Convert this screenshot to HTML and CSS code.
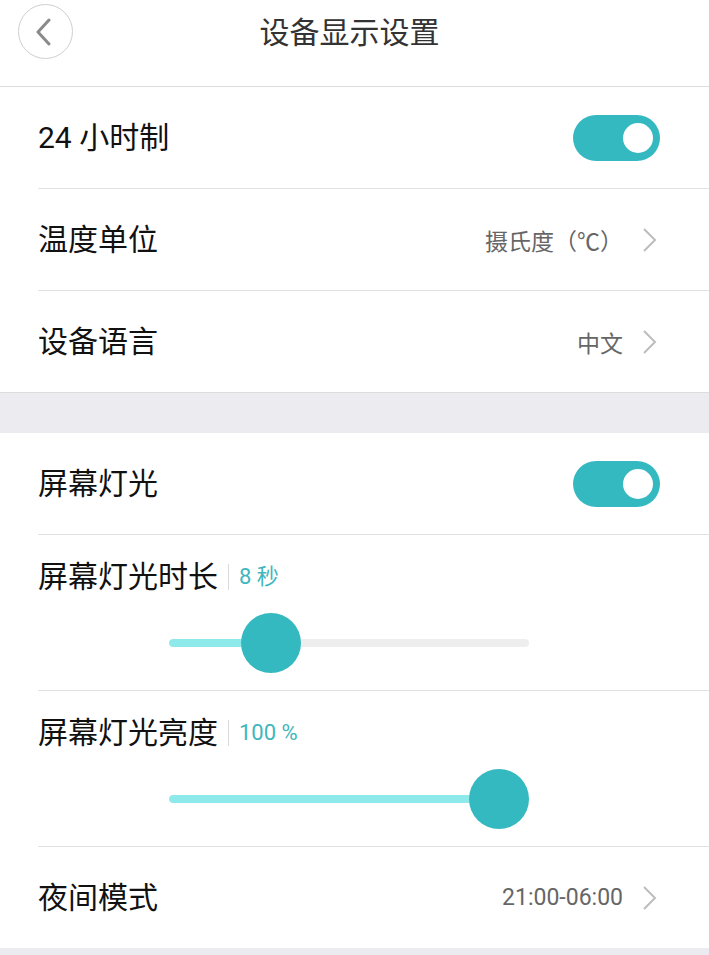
FILE: index.html
```html
<!DOCTYPE html>
<html lang="zh-CN">
<head>
    <meta charset="UTF-8">
    <meta name="viewport" content="width=device-width, initial-scale=1.0">
    <title>设备显示设置</title>
    <link rel="stylesheet" href="styles.css">
</head>
<body>
    <header class="top-bar">
        <button class="back-btn" aria-label="返回">
            <svg width="20" height="28" viewBox="0 0 20 28">
                <polyline points="15,2 4,14 15,26" fill="none" stroke="#8a8a8a" stroke-width="3" stroke-linecap="round" stroke-linejoin="round"/>
            </svg>
        </button>
        <h1 class="page-title">设备显示设置</h1>
    </header>

    <!-- Basic settings -->
    <section class="group">
        <div class="row">
            <span class="row-label">24 小时制</span>
            <span class="switch"><span class="switch-knob"></span></span>
        </div>
        <div class="row">
            <span class="row-label">温度单位</span>
            <span class="row-value">摄氏度（℃）</span>
            <svg class="chevron" width="16" height="26" viewBox="0 0 16 26">
                <polyline points="2,2 13,13 2,24" fill="none" stroke="#bdbdbd" stroke-width="2"/>
            </svg>
        </div>
        <div class="row">
            <span class="row-label">设备语言</span>
            <span class="row-value">中文</span>
            <svg class="chevron" width="16" height="26" viewBox="0 0 16 26">
                <polyline points="2,2 13,13 2,24" fill="none" stroke="#bdbdbd" stroke-width="2"/>
            </svg>
        </div>
    </section>

    <div class="spacer"></div>

    <!-- Screen light settings -->
    <section class="group">
        <div class="row">
            <span class="row-label">屏幕灯光</span>
            <span class="switch"><span class="switch-knob"></span></span>
        </div>
        <div class="row slider-row">
            <div class="slider-head">
                <span class="row-label">屏幕灯光时长</span>
                <span class="slider-value">8 秒</span>
            </div>
            <div class="slider">
                <div class="slider-track"><div class="slider-fill" style="width: 102px"></div></div>
                <div class="slider-thumb" style="left: 72px"></div>
            </div>
        </div>
        <div class="row slider-row">
            <div class="slider-head">
                <span class="row-label">屏幕灯光亮度</span>
                <span class="slider-value">100 %</span>
            </div>
            <div class="slider">
                <div class="slider-track"><div class="slider-fill" style="width: 330px"></div></div>
                <div class="slider-thumb" style="left: 300px"></div>
            </div>
        </div>
        <div class="row">
            <span class="row-label">夜间模式</span>
            <span class="row-value">21:00-06:00</span>
            <svg class="chevron" width="16" height="26" viewBox="0 0 16 26">
                <polyline points="2,2 13,13 2,24" fill="none" stroke="#bdbdbd" stroke-width="2"/>
            </svg>
        </div>
    </section>
</body>
</html>
```

FILE: styles.css
```css
* {
    margin: 0;
    padding: 0;
    box-sizing: border-box;
}

body {
    background-color: #ebebf0;
    font-family: Roboto, "Noto Sans CJK SC", sans-serif;
    color: #111;
}

/* Header */
.top-bar {
    display: flex;
    align-items: flex-start;
    height: 87px;
    padding: 4px 0 0 18px;
    background-color: #fff;
    border-bottom: 1px solid #dcdcdc;
}

.back-btn {
    width: 55px;
    height: 55px;
    border: 1px solid #cfcfcf;
    border-radius: 50%;
    background: #fff;
    display: flex;
    align-items: center;
    justify-content: center;
    padding-right: 4px;
}

.page-title {
    flex: 1;
    margin-right: 83px;
    text-align: center;
    font-size: 30px;
    font-weight: normal;
    line-height: 58px;
    color: #333;
}

/* Groups and rows */
.group {
    background-color: #fff;
}

.row {
    display: flex;
    align-items: center;
    height: 102px;
    margin-left: 38px;
    padding-right: 49px;
    border-bottom: 1px solid #e2e2e2;
}

.row:last-child {
    height: 101px;
    border-bottom: none;
}

.row-label {
    flex: 1;
    font-size: 30px;
    line-height: 40px;
    color: #111;
}

.row-value {
    font-size: 23px;
    color: #666;
    margin-right: 19px;
}

.chevron {
    margin-right: 2px;
}

.spacer {
    height: 41px;
    border-top: 1px solid #dcdcdc;
}

/* Switch */
.switch {
    display: flex;
    justify-content: flex-end;
    align-items: center;
    width: 87px;
    height: 46px;
    padding: 0 7px;
    border-radius: 23px;
    background-color: #35b9c1;
}

.switch-knob {
    width: 30px;
    height: 30px;
    border-radius: 50%;
    background-color: #fff;
}

/* Sliders */
.slider-row {
    display: block;
    height: 156px;
    padding-top: 22px;
}

.slider-head {
    display: flex;
    align-items: center;
}

.slider-head .row-label {
    flex: none;
}

.slider-value {
    margin-left: 10px;
    padding-left: 10px;
    border-left: 1px solid #dadada;
    font-size: 22px;
    line-height: 26px;
    color: #3fb6bd;
}

.slider {
    position: relative;
    width: 360px;
    height: 60px;
    margin: 16px 0 0 131px;
}

.slider-track {
    position: relative;
    top: 26px;
    height: 8px;
    border-radius: 4px;
    background-color: #eeeeee;
    overflow: hidden;
}

.slider-fill {
    height: 100%;
    border-radius: 4px;
    background-color: #8eeaea;
}

.slider-thumb {
    position: absolute;
    top: 0;
    width: 60px;
    height: 60px;
    border-radius: 50%;
    background-color: #35b9c1;
}
```
